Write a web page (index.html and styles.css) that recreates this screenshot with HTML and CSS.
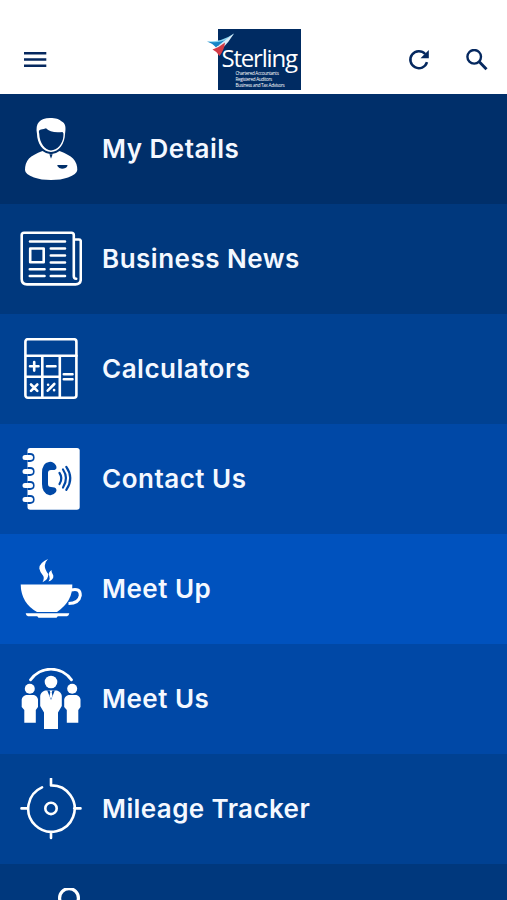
FILE: index.html
```html
<!DOCTYPE html>
<html lang="en">
<head>
    <meta charset="UTF-8">
    <meta name="viewport" content="width=device-width, initial-scale=1.0">
    <title>Sterling</title>
    <link rel="stylesheet" href="styles.css">
</head>
<body>
    <header>
        <button class="menu-button" aria-label="Menu">
            <svg width="24" height="18" viewBox="0 0 24 18"><path d="M0 2.3h22.3M0 8.5h22.3M0 14.7h22.3" fill="none" stroke="#05285f" stroke-width="2.4"/></svg>
        </button>
        <div class="logo">
            <svg class="logo-bird" width="28" height="24" viewBox="0 0 28 24">
                <path d="M0 8.5Q15 9 27 .5Q22 7 12 12Q6 9 0 8.5Z" fill="#8bd5f0"/>
                <path d="M0 8.5Q12 10.5 19 6.5L9 14.5Q6 10.5 0 8.5Z" fill="#1686c7"/>
                <path d="M9.5 14L27 .5Q22 9 14 17Z" fill="#dbeaf7"/>
                <path d="M5.5 16.5Q12 14.5 18 9.5Q17.5 16.5 12.5 23Q10 18.5 5.5 16.5Z" fill="#d33a45"/>
            </svg>
            <div class="logo-name">Sterling</div>
            <div class="logo-text">Chartered Accountants<br>Registered Auditors<br>Business and Tax Advisors</div>
        </div>
        <div class="actions">
            <button aria-label="Refresh">
                <svg width="22" height="22" viewBox="0 0 22 22"><path d="M17.2 5A8.5 8.5 0 1 0 19 13.2" fill="none" stroke="#05285f" stroke-width="2.5"/><path d="M20.8 1v8.3h-8.3Z" fill="#05285f"/></svg>
            </button>
            <button aria-label="Search">
                <svg width="22" height="22" viewBox="0 0 22 22"><circle cx="8.2" cy="7.8" r="6.8" fill="none" stroke="#05285f" stroke-width="2.4"/><path d="M13 12.5l7.5 7.7" fill="none" stroke="#05285f" stroke-width="2.9"/></svg>
            </button>
        </div>
    </header>

    <nav>
        <a class="item details">
            <svg class="icon" viewBox="0 0 62 62">
                <path d="M17 16C15 5 20 0 30 0C36 0 39 1 41 3C46 5 46 10 45 16C45 25 39 34 31 34C23 34 17 25 17 16Z" fill="#fff"/>
                <path d="M19.2 15.5Q18 12 21 11.5Q24 11 26 10.3Q31 15.5 42.5 14Q44 15 43.4 18C43 26 37 32.4 31 32.4C25 32.4 19.5 25 19.2 15.5Z" fill="#002f6a"/>
                <path d="M22.5 33Q31 39.5 39.5 33Q49 36.5 53 40.5Q57.3 45 57.3 52Q57 56 48 59.5Q41 62 31 62Q21 62 14 59.5Q5 56 5 52Q5 45 9 40.5Q13 36.5 22.5 33Z" fill="#fff"/>
                <path d="M29.4 36.2h3.2L31 40.8Z" fill="#002f6a"/>
                <path d="M37.4 47h10v1Q46 50.7 42 50.7Q38.8 50.7 37.4 48Z" fill="#002f6a"/>
            </svg>
            <span>My Details</span>
        </a>
        <a class="item news">
            <svg class="icon line" viewBox="0 0 62 62">
                <path d="M53.8 48V7Q53.8 4.8 51.5 4.8H4Q1.7 4.8 1.7 7V51Q1.7 56.4 7 56.4H55.5Q60.8 56.4 60.8 51V13.5Q60.8 11.5 59 11.5H54.5M53.8 48Q53.8 50.8 56.2 50.8"/>
                <path d="M10 13.5H45M30.8 20.5H45M30.8 27.5H45M30.8 34.5H45M30.8 41.2H45M30.8 48H45M9.8 41.2H24.5M9.8 48H24.5M10.2 20.5H23.7V34.3H10.2Z"/>
            </svg>
            <span>Business News</span>
        </a>
        <a class="item calculators">
            <svg class="icon line" viewBox="0 0 62 62">
                <rect x="5.4" y="1.2" width="51" height="58.6" rx="2.5"/>
                <path d="M6 17.7H56.5M22.3 18V59.5M39.8 18V59.5M6 38.8H39.8"/>
                <path d="M10 28.3H18.5M14.2 24V32.6M27 28.3H35.5M43.8 36.2H52.5M43.8 41.2H52.5M11 46.5L17.3 52.8M17.3 46.5L11 52.8"/>
                <path d="M27.7 52.7L34.3 46M28.1 46.7v.1M34.1 52.1v.1"/>
            </svg>
            <span>Calculators</span>
        </a>
        <a class="item contact">
            <svg class="icon" viewBox="0 0 62 62">
                <path d="M10 0H57Q59.7 0 59.7 2.5V59Q59.7 61.7 57 61.7H10Q7.5 61.7 7.5 59V2.5Q7.5 0 10 0Z" fill="#fff"/>
                <path d="M7.5 5.1H10Q14.6 5.1 14.6 9.5T10 13.9H7.5ZM7.5 19.1H10Q14.6 19.1 14.6 23.5T10 27.9H7.5ZM7.5 33.1H10Q14.6 33.1 14.6 37.5T10 41.9H7.5ZM7.5 47.1H10Q14.6 47.1 14.6 51.5T10 55.9H7.5Z" fill="#0048a6"/>
                <path d="M5 9.5H10.5M5 23.5H10.5M5 37.5H10.5M5 51.5H10.5" stroke="#fff" stroke-width="5" stroke-linecap="round"/>
                <path d="M29 14Q22 15 22 25V36Q22 45 29 47Q33 48 36 44Q37.5 41 34.5 39.5L31 39Q28 39 28 36V25Q28 22 31 22L34.5 22Q37.5 21 36 17.5Q33 13 29 14Z" fill="#0048a6"/>
                <path d="M39.5 25Q43.2 30.2 39.5 36M43 21.5Q49 30.2 43 39.5M46.3 18.8Q54.3 30.2 46.3 41.8" fill="none" stroke="#0048a6" stroke-width="2.2" stroke-linecap="round"/>
            </svg>
            <span>Contact Us</span>
        </a>
        <a class="item meet-up">
            <svg class="icon" viewBox="0 0 62 62">
                <path d="M28 1Q19 5 19.3 10.5Q20 14.5 23.3 18Q24.5 20.5 22.5 24.3Q29 21 28.2 16Q24.5 11 24.8 7.5Q25 4 28 1ZM31.5 12Q27.5 15 29.3 18Q30.5 21 28.5 23.5Q34 21.5 33.3 17.5Q31 14 31.5 12Z" fill="#fff"/>
                <path d="M.7 26.5H52.3Q53 43 37 54H17Q1 45 .7 26.5Z" fill="#fff"/>
                <path d="M51 32Q60.5 29.5 60.3 37.5Q59 45.5 48.5 45.5" fill="none" stroke="#fff" stroke-width="3"/>
                <path d="M5.7 55.3H49.3Q49 57.8 47 58.2H8Q6 57.8 5.7 55.3ZM17 58H38L36.5 59.8H18.5Z" fill="#fff"/>
            </svg>
            <span>Meet Up</span>
        </a>
        <a class="item meet-us">
            <svg class="icon" viewBox="0 0 62 62">
                <path d="M10.5 11.8Q18.5 1.2 31 1.2T51.5 11.8" fill="none" stroke="#fff" stroke-width="2.8" stroke-linecap="round"/>
                <g fill="#fff">
                    <circle cx="31" cy="14" r="6.3"/>
                    <circle cx="9.8" cy="20.8" r="5"/>
                    <circle cx="52.2" cy="20.8" r="5"/>
                    <path d="M25 22.5H37Q41.5 24 41.8 28V38L38 44.5V61H24V44.5L20.2 38V28Q20.5 24 25 22.5Z"/>
                    <path id="person" d="M6 27H14Q17.5 28.2 18 31.5V39L15.8 42V54.8H4.3V42L1.7 39V31.5Q2.2 28.2 6 27Z"/>
                    <use href="#person" x="42.5"/>
                </g>
                <path d="M27.2 22.5L31 32L34.8 22.5" fill="#0048a6"/>
                <path d="M29.5 22.5H32.5L31.7 24.4L32.5 28L31 31L29.5 28L30.3 24.4Z" fill="#fff"/>
            </svg>
            <span>Meet Us</span>
        </a>
        <a class="item mileage">
            <svg class="icon line" viewBox="0 0 62 62">
                <path d="M31 .8V7.4A23.2 23.2 0 1 1 22 9.4M1.5 30.4H7.8M54.2 30.4H60.5M31 53.8V60"/>
                <circle cx="31" cy="30.4" r="5.7"/>
            </svg>
            <span>Mileage Tracker</span>
        </a>
        <a class="item last">
            <svg class="icon line" viewBox="0 0 62 62">
                <circle cx="49" cy="10" r="9.4"/>
            </svg>
        </a>
    </nav>
</body>
</html>
```

FILE: styles.css
```css
body {
    margin: 0;
    background: #fff;
    font-family: Inter, "Liberation Sans", sans-serif;
}
header {
    display: grid;
    grid-template-columns: 1fr 83px 1fr;
    align-items: start;
    box-sizing: border-box;
    height: 94px;
    padding: 29px 19px 0 24px;
}
button {
    padding: 0;
    border: none;
    background: none;
    line-height: 0;
    cursor: pointer;
}
.menu-button {
    justify-self: start;
    margin-top: 22px;
}
.actions {
    display: flex;
    justify-content: flex-end;
    gap: 36px;
    margin-top: 20px;
}
.logo {
    position: relative;
    box-sizing: border-box;
    width: 83px;
    height: 61px;
    margin-left: 3px;
    padding-top: 17px;
    background: #002b62;
    color: #fff;
}
.logo-bird {
    position: absolute;
    top: 4px;
    left: -11px;
}
.logo-name {
    padding-left: 4px;
    font-family: "Open Sans", sans-serif;
    font-size: 24px;
    font-weight: 500;
    line-height: 24px;
    letter-spacing: -1.2px;
}
.logo-text {
    padding-top: 1px;
    padding-left: 18px;
    font-family: "Open Sans", sans-serif;
    font-size: 4.6px;
    line-height: 5.8px;
    letter-spacing: -0.3px;
    white-space: nowrap;
}
.item {
    display: flex;
    align-items: center;
    gap: 20px;
    box-sizing: border-box;
    height: 110px;
    padding-left: 20px;
    color: #f4f8ff;
    font-size: 26px;
    font-weight: 600;
    letter-spacing: 0.5px;
}
.item span {
    padding-bottom: 1px;
}
.icon {
    flex: none;
    width: 62px;
    height: 62px;
}
.line {
    fill: none;
    stroke: #fff;
    stroke-width: 2.6;
    stroke-linecap: round;
    stroke-linejoin: round;
}
.details {
    background: #002f6a;
}
.news {
    background: #00387d;
}
.calculators, .mileage {
    background: #004192;
}
.contact, .meet-us {
    background: #0048a6;
}
.meet-up {
    background: #0052be;
}
.mileage {
    letter-spacing: 0.4px;
}
.last {
    align-items: flex-start;
    height: 36px;
    padding-top: 24px;
    background: #00387d;
    overflow: hidden;
}
.last .icon {
    stroke-width: 3.2;
}
```
